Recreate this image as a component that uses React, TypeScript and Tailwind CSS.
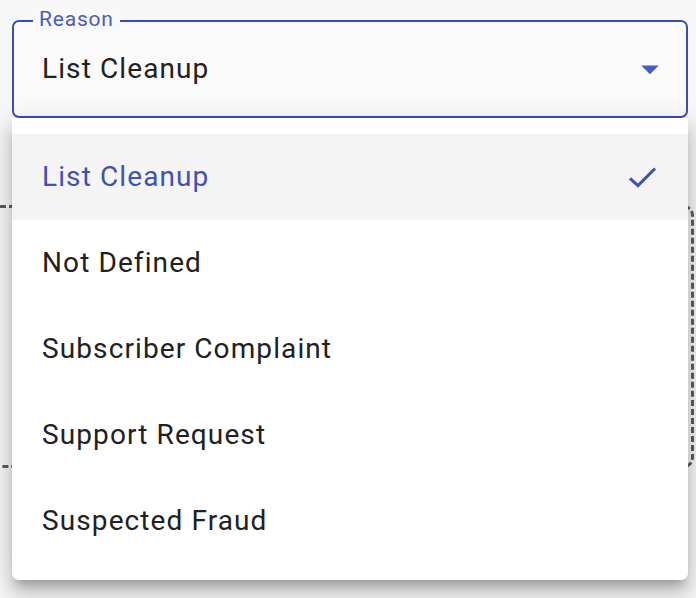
import { useState } from "react";

const OPTIONS = [
  "List Cleanup",
  "Not Defined",
  "Subscriber Complaint",
  "Support Request",
  "Suspected Fraud",
];

export default function App() {
  const [value, setValue] = useState("List Cleanup");

  return (
    <div
      className="relative min-h-screen overflow-hidden bg-[#f7f7f7] text-[#212121]"
      style={{ fontFamily: "Roboto, 'Liberation Sans', sans-serif" }}
    >
      {/* Select field */}
      <div className="pl-3 pr-2 pt-5">
        <div className="relative flex h-[98px] items-center rounded-[7px] border-2 border-[#3d4eb3] bg-[#fafafa] pl-[28px] pr-[15px]">
          <span className="absolute left-[19px] top-[-13px] bg-[#f8f8f8] px-[6px] text-[21px] leading-[21px] tracking-[0.8px] text-[#4a5bc0]">
            Reason
          </span>
          <span className="flex-1 text-[28px] tracking-[1.1px]">{value}</span>
          <svg width="42" height="42" viewBox="0 0 24 24" className="fill-[#4a5bc0]">
            <path d="M7 10l5 5 5-5z" />
          </svg>
        </div>
      </div>

      {/* Dashed drop zone behind the menu */}
      <div className="-ml-[10px] mr-[2px] mt-[87px] h-[263px] rounded-[10px] border-[3px] border-dashed border-[#5a5a6e]" />

      {/* Open menu */}
      <ul className="absolute left-3 top-[118px] w-[676px] rounded-b-[7px] bg-white py-4 shadow-[0_9px_9px_-5px_rgba(0,0,0,0.2),0_14px_17px_2px_rgba(0,0,0,0.14),0_5px_24px_3px_rgba(0,0,0,0.12)]">
        {OPTIONS.map((opt) => {
          const selected = opt === value;
          return (
            <li
              key={opt}
              onClick={() => setValue(opt)}
              className={
                selected
                  ? "flex h-[86px] items-center bg-[#f4f4f4] pl-[30px] pr-[28px] text-[28px] tracking-[1.1px] text-[#3f51b5]"
                  : "flex h-[86px] items-center pl-[30px] pr-[28px] text-[28px] tracking-[1.1px] text-[#212121]"
              }
            >
              <span className="flex-1">{opt}</span>
              {selected && (
                <svg width="35" height="35" viewBox="0 0 24 24" fill="none">
                  <polyline
                    points="3.4,12.6 8.9,17.6 20.6,5.8"
                    stroke="#3f51b5"
                    strokeWidth="2.1"
                  />
                </svg>
              )}
            </li>
          );
        })}
      </ul>
    </div>
  );
}
